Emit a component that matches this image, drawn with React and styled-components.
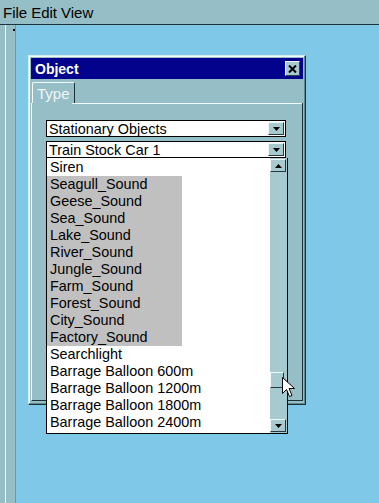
import styled, { createGlobalStyle } from "styled-components";

const GlobalStyle = createGlobalStyle`
  html, body {
    margin: 0;
    padding: 0;
    background: #80c8e8;
  }
  body {
    font-family: "Liberation Sans", Arial, sans-serif;
  }
`;

const teal = "#96bec6";
const tealLight = "#a6cacf";
const dark = "#1c3238";

const Screen = styled.div`
  width: 379px;
  height: 503px;
  display: flex;
  flex-direction: column;
  overflow: hidden;
`;

const MenuBar = styled.div`
  height: 24px;
  flex: none;
  display: flex;
  align-items: center;
  gap: 4px;
  padding-left: 3px;
  background: ${teal};
  border-bottom: 1px solid ${dark};
  font-size: 15px;
  color: #000;
`;

const Workspace = styled.div`
  flex: 1;
  display: flex;
`;

const LeftRail = styled.div`
  width: 16px;
  flex: none;
  position: relative;
  background: linear-gradient(
    to right,
    ${teal} 0 5px,
    #f4fafa 5px 6px,
    ${teal} 6px 15px,
    #6e98a0 15px 16px
  );

  &::after {
    content: "";
    position: absolute;
    left: 13px;
    top: 4px;
    width: 2px;
    height: 2px;
    background: #000;
  }
`;

const Desktop = styled.div`
  flex: 1;
  padding: 30px 0 0 12px;
  background: #80c8e8;
`;

const Window = styled.div`
  width: 272px;
  height: 343px;
  display: flex;
  flex-direction: column;
  padding: 2px 2px 3px;
  background: ${teal};
  border: 1px solid;
  border-color: #d6ecee ${dark} ${dark} #d6ecee;
  box-shadow: inset -1px -1px 0 #5f8890, inset 1px 1px 0 #f4fbfb;
`;

const TitleBar = styled.div`
  height: 21px;
  flex: none;
  display: flex;
  align-items: center;
  justify-content: space-between;
  padding: 0 3px 0 4px;
  background: #02028c;
  color: #fff;
  font-weight: bold;
  font-size: 14px;
`;

const CloseButton = styled.div`
  width: 13px;
  height: 13px;
  display: flex;
  align-items: center;
  justify-content: center;
  background: ${tealLight};
  border: 1px solid;
  border-color: #eef8f8 #2a4048 #2a4048 #eef8f8;
`;

const TabStrip = styled.div`
  display: flex;
  margin-top: 3px;
`;

const Tab = styled.div`
  height: 20px;
  padding: 0 4px 0 4px;
  margin-left: 1px;
  display: flex;
  align-items: center;
  font-size: 15px;
  color: #eef6f6;
  border-top: 1px solid #f4fbfb;
  border-left: 1px solid #f4fbfb;
  border-right: 1px solid ${dark};
  border-radius: 2px 2px 0 0;
`;

const Panel = styled.div`
  flex: 1;
  padding: 17px 13px 17px 14px;
  border: 1px solid;
  border-color: #f4fbfb ${dark} ${dark} #f4fbfb;
  border-top: none;
  background: linear-gradient(#f4fbfb, #f4fbfb) no-repeat 40px 0 / 100% 1px;
`;

const ComboStack = styled.div`
  position: relative;
  width: 240px;
  display: flex;
  flex-direction: column;
  gap: 4px;
`;

const Combo = styled.div`
  height: 15px;
  display: flex;
  align-items: center;
  justify-content: space-between;
  padding: 0 1px 0 2px;
  background: #fff;
  border: 1px solid #000;
  font-size: 14.4px;
  color: #000;
`;

const ArrowButton = styled.div`
  width: 14px;
  height: 11px;
  flex: none;
  display: flex;
  align-items: center;
  justify-content: center;
  background: ${tealLight};
  border: 1px solid;
  border-color: #eef8f8 #24383e #24383e #eef8f8;
`;

const PopupList = styled.div`
  position: absolute;
  top: 100%;
  left: 0;
  width: 240px;
  height: 275px;
  display: flex;
  background: #fff;
  border: 1px solid #000;
  border-top: none;
  z-index: 2;
`;

const Items = styled.div`
  flex: 1;
  padding-top: 1px;
`;

const Item = styled.div`
  height: 17px;
  display: flex;
  align-items: center;
`;

const ItemLabel = styled.span`
  display: block;
  width: 132px;
  height: 17px;
  line-height: 17px;
  padding-left: 3px;
  font-size: 14.4px;
  color: #000;
  white-space: nowrap;
  background: ${props => (props.$selected ? "#c0c0c0" : "transparent")};
`;

const ScrollBar = styled.div`
  width: 16px;
  flex: none;
  display: flex;
  flex-direction: column;
  justify-content: space-between;
  padding: 1px 1px 1px 0;
  background: ${tealLight};
  position: relative;
`;

const Thumb = styled.div`
  position: absolute;
  left: 0;
  top: 214px;
  width: 12px;
  height: 14px;
  border: 1px solid;
  border-color: #f4fbfb #24383e #24383e #f4fbfb;
`;

const Cursor = styled.svg`
  position: absolute;
  left: 12px;
  top: 219px;
  z-index: 3;
`;

const DownTriangle = () => (
  <svg width="7" height="4" viewBox="0 0 7 4">
    <path d="M0 0h7L3.5 4z" fill="#000" />
  </svg>
);

const UpTriangle = () => (
  <svg width="7" height="4" viewBox="0 0 7 4">
    <path d="M0 4h7L3.5 0z" fill="#000" />
  </svg>
);

const items = [
  { name: "Siren" },
  { name: "Seagull_Sound", selected: true },
  { name: "Geese_Sound", selected: true },
  { name: "Sea_Sound", selected: true },
  { name: "Lake_Sound", selected: true },
  { name: "River_Sound", selected: true },
  { name: "Jungle_Sound", selected: true },
  { name: "Farm_Sound", selected: true },
  { name: "Forest_Sound", selected: true },
  { name: "City_Sound", selected: true },
  { name: "Factory_Sound", selected: true },
  { name: "Searchlight" },
  { name: "Barrage Balloon 600m" },
  { name: "Barrage Balloon 1200m" },
  { name: "Barrage Balloon 1800m" },
  { name: "Barrage Balloon 2400m" },
];

const App = () => (
  <Screen>
    <GlobalStyle />
    <MenuBar>
      <span>File</span>
      <span>Edit</span>
      <span>View</span>
    </MenuBar>
    <Workspace>
      <LeftRail />
      <Desktop>
        <Window>
          <TitleBar>
            <span>Object</span>
            <CloseButton>
              <svg width="9" height="8" viewBox="0 0 9 8">
                <path d="M1 0.5l7 7M8 0.5l-7 7" stroke="#000" strokeWidth="2" />
              </svg>
            </CloseButton>
          </TitleBar>
          <TabStrip>
            <Tab>Type</Tab>
          </TabStrip>
          <Panel>
            <ComboStack>
              <Combo>
                <span>Stationary Objects</span>
                <ArrowButton><DownTriangle /></ArrowButton>
              </Combo>
              <Combo>
                <span>Train Stock Car 1</span>
                <ArrowButton><DownTriangle /></ArrowButton>
              </Combo>
              <PopupList>
                <Items>
                  {items.map(item => (
                    <Item key={item.name}>
                      <ItemLabel $selected={item.selected}>{item.name}</ItemLabel>
                    </Item>
                  ))}
                </Items>
                <ScrollBar>
                  <ArrowButton><UpTriangle /></ArrowButton>
                  <Thumb />
                  <Cursor width="13" height="21" viewBox="0 0 13 21">
                    <path
                      d="M0.5 0.5v16l4-4 3 7 2.5-1-3-7h5.5z"
                      fill="#fff"
                      stroke="#000"
                      strokeWidth="1"
                    />
                  </Cursor>
                  <ArrowButton><DownTriangle /></ArrowButton>
                </ScrollBar>
              </PopupList>
            </ComboStack>
          </Panel>
        </Window>
      </Desktop>
    </Workspace>
  </Screen>
);

export default App;
